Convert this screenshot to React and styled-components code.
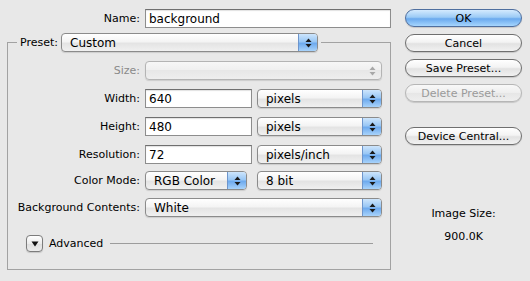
import React from "react";
import styled, { createGlobalStyle } from "styled-components";

const Global = createGlobalStyle`
  html, body { margin: 0; padding: 0; background: #e8e8e8; }
  body {
    font-family: "DejaVu Sans", "Liberation Sans", sans-serif;
    font-size: 11px;
    color: #000;
  }
  * { box-sizing: border-box; }
`;

const Dialog = styled.div`
  width: 530px;
  height: 281px;
  display: flex;
  gap: 14px;
  padding: 9px 8px 0 7px;
  background: #e8e8e8;
`;

const LeftCol = styled.div`
  width: 384px;
  display: flex;
  flex-direction: column;
`;

const NameRow = styled.div`
  display: grid;
  grid-template-columns: 133px 246px;
  column-gap: 5px;
  align-items: center;
`;

const Label = styled.label`
  text-align: right;
  white-space: nowrap;
  color: ${(p) => (p.$disabled ? "#8a8a8a" : "#000")};
`;

const TextField = styled.div`
  height: ${(p) => p.$h || 19}px;
  width: ${(p) => p.$w}px;
  background: #fff;
  border: 1px solid #8d8d8d;
  border-top-color: #6f6f6f;
  box-shadow: inset 0 1px 1px rgba(0, 0, 0, 0.12);
  padding: 0 3px;
  display: flex;
  align-items: center;
  font-size: 12px;
`;

const Group = styled.fieldset`
  margin: 5px 0 0;
  padding: 0 17px 17px 0;
  border: 1px solid #a2a2a2;
  width: 384px;
  min-inline-size: 0;
`;

const Legend = styled.legend`
  margin-left: 9px;
  padding: 0 3px;
  display: flex;
  align-items: center;
  gap: 3px;
`;

const Row = styled.div`
  display: grid;
  grid-template-columns: 132px auto;
  column-gap: 5px;
  align-items: center;
  height: 19px;
  margin-top: ${(p) => p.$mt}px;
`;

const Controls = styled.div`
  display: flex;
  align-items: center;
  gap: ${(p) => p.$gap || 5}px;
`;

const PopupBox = styled.div`
  width: ${(p) => p.$w}px;
  height: 19px;
  border: 1px solid ${(p) => (p.$disabled ? "#b4b4b4" : "#8b8b8b")};
  border-radius: 4px;
  background: ${(p) =>
    p.$disabled
      ? "linear-gradient(#f7f7f7, #efefef 50%, #e7e7e7 50%, #eeeeee)"
      : "linear-gradient(#ffffff, #f4f4f4 45%, #e4e4e4 55%, #f0f0f0)"};
  box-shadow: 0 1px 1px rgba(0, 0, 0, 0.12);
  display: flex;
  align-items: center;
  overflow: hidden;
`;

const PopupText = styled.span`
  flex: 1;
  padding-left: 8px;
  font-size: 12px;
  white-space: nowrap;
`;

const ArrowCap = styled.div`
  width: 19px;
  height: 100%;
  display: flex;
  align-items: center;
  justify-content: center;
  border-left: 1px solid ${(p) => (p.$disabled ? "transparent" : "#6d95cc")};
  background: ${(p) =>
    p.$disabled
      ? "transparent"
      : "linear-gradient(#cde5fc, #99c7f5 45%, #6eaaee 55%, #a8d3fb)"};
`;

const Arrows = ({ color }) => (
  <svg width="7" height="10" viewBox="0 0 7 10">
    <polygon points="3.5,0.5 6.5,4 0.5,4" fill={color} />
    <polygon points="0.5,6 6.5,6 3.5,9.5" fill={color} />
  </svg>
);

const Popup = ({ w, value, disabled }) => (
  <PopupBox $w={w} $disabled={disabled}>
    <PopupText>{value}</PopupText>
    <ArrowCap $disabled={disabled}>
      <Arrows color={disabled ? "#a8a8a8" : "#1a1a1a"} />
    </ArrowCap>
  </PopupBox>
);

const AdvancedRow = styled.div`
  display: flex;
  align-items: center;
  gap: 6px;
  margin-top: 18px;
  padding-left: 18px;
  height: 17px;
`;

const Disclosure = styled.div`
  width: 17px;
  height: 17px;
  border: 1px solid #7c7c7c;
  border-radius: 4px;
  background: linear-gradient(#ffffff, #ececec 50%, #dedede 50%, #ececec);
  box-shadow: 0 1px 1px rgba(0, 0, 0, 0.15);
  display: flex;
  align-items: center;
  justify-content: center;
`;

const Rule = styled.div`
  flex: 1;
  height: 1px;
  background: #9c9c9c;
  margin-left: 1px;
`;

const RightCol = styled.div`
  width: 117px;
  display: flex;
  flex-direction: column;
  gap: 7px;
`;

const Button = styled.div`
  height: 18px;
  border-radius: 9px;
  border: 1px solid ${(p) => (p.$primary ? "#4f6f9f" : p.$disabled ? "#b6b6b6" : "#6f6f6f")};
  background: ${(p) =>
    p.$primary
      ? "linear-gradient(#d4eafe, #9ccbf6 45%, #6aa9ee 55%, #a6d6fe)"
      : p.$disabled
      ? "linear-gradient(#f8f8f8, #eeeeee 50%, #e6e6e6 50%, #eeeeee)"
      : "linear-gradient(#ffffff, #f3f3f3 45%, #e2e2e2 55%, #f1f1f1)"};
  color: ${(p) => (p.$disabled ? "#9a9a9a" : "#000")};
  box-shadow: 0 1px 1px rgba(0, 0, 0, 0.15);
  display: flex;
  align-items: center;
  justify-content: center;
  font-size: 11px;
  margin-top: ${(p) => p.$mt || 0}px;
  white-space: nowrap;
`;

const SizeInfo = styled.div`
  margin-top: 55px;
  display: flex;
  flex-direction: column;
  align-items: center;
  gap: 9px;
  line-height: 14px;
`;

export default function App() {
  return (
    <>
      <Global />
      <Dialog>
        <LeftCol>
          <NameRow>
            <Label>Name:</Label>
            <TextField $w={246}>background</TextField>
          </NameRow>
          <Group>
            <Legend>
              <span>Preset:</span>
              <Popup w={257} value="Custom" />
            </Legend>
            <Row $mt={9}>
              <Label $disabled>Size:</Label>
              <Popup w={237} value="" disabled />
            </Row>
            <Row $mt={9}>
              <Label>Width:</Label>
              <Controls>
                <TextField $w={107}>640</TextField>
                <Popup w={125} value="pixels" />
              </Controls>
            </Row>
            <Row $mt={9}>
              <Label>Height:</Label>
              <Controls>
                <TextField $w={107}>480</TextField>
                <Popup w={125} value="pixels" />
              </Controls>
            </Row>
            <Row $mt={9}>
              <Label>Resolution:</Label>
              <Controls>
                <TextField $w={107}>72</TextField>
                <Popup w={125} value="pixels/inch" />
              </Controls>
            </Row>
            <Row $mt={7}>
              <Label>Color Mode:</Label>
              <Controls $gap={10}>
                <Popup w={102} value="RGB Color" />
                <Popup w={125} value="8 bit" />
              </Controls>
            </Row>
            <Row $mt={8}>
              <Label>Background Contents:</Label>
              <Popup w={237} value="White" />
            </Row>
            <AdvancedRow>
              <Disclosure>
                <svg width="8" height="6" viewBox="0 0 8 6">
                  <polygon points="0.5,0.5 7.5,0.5 4,5.5" fill="#111" />
                </svg>
              </Disclosure>
              <span>Advanced</span>
              <Rule />
            </AdvancedRow>
          </Group>
        </LeftCol>
        <RightCol>
          <Button $primary>OK</Button>
          <Button>Cancel</Button>
          <Button>Save Preset...</Button>
          <Button $disabled>Delete Preset...</Button>
          <Button $mt={18}>Device Central...</Button>
          <SizeInfo>
            <span>Image Size:</span>
            <span>900.0K</span>
          </SizeInfo>
        </RightCol>
      </Dialog>
    </>
  );
}
